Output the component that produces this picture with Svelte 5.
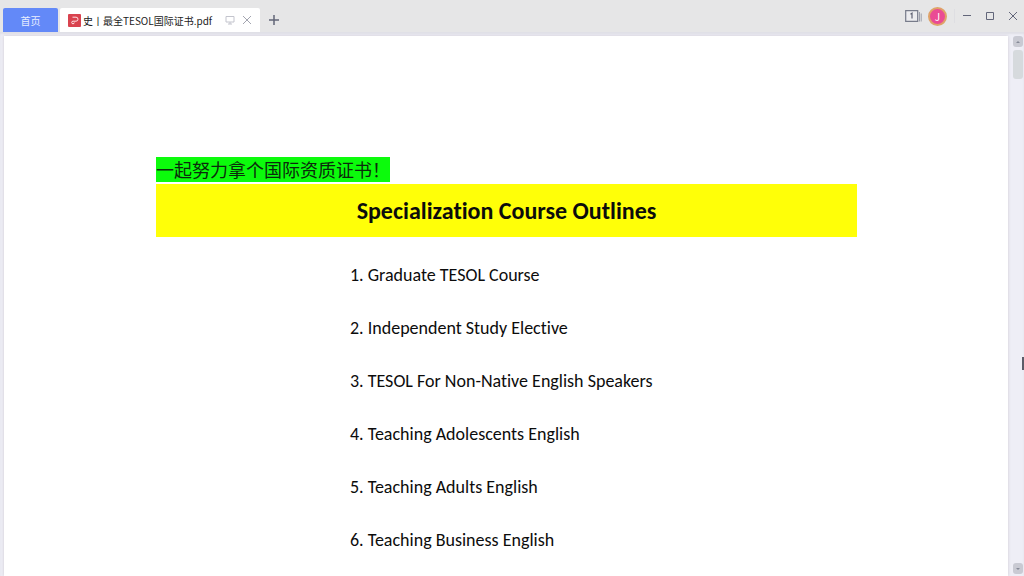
<script lang="ts">
  const fileName = '史丨最全TESOL国际证书.pdf';
  const initial = 'J';

  const courses = [
    'Graduate TESOL Course',
    'Independent Study Elective',
    'TESOL For Non-Native English Speakers',
    'Teaching Adolescents English',
    'Teaching Adults English',
    'Teaching Business English'
  ];
</script>

<div class="app">
  <header class="titlebar">
    <nav class="tabs">
      <button class="tab home">首页</button>
      <div class="tab file">
        <svg class="pdf" viewBox="0 0 13 13" width="13" height="13" aria-hidden="true">
          <rect width="13" height="13" rx="1" fill="#d9434f" />
          <path
            d="M4.5 3.2H8a2 2 0 0 1 0 4H5a1.3 1.3 0 1 0 1.3 1.3"
            fill="none"
            stroke="#ffe3e5"
            stroke-width="1"
          />
        </svg>
        <span class="name">{fileName}</span>
        <button class="icon" aria-label="Present">
          <svg viewBox="0 0 10 10" width="10" height="10">
            <path d="M1 1.5h8v5.5H1zM5 7v2M3 9h4" fill="none" stroke="#c3c4cd" />
          </svg>
        </button>
        <button class="icon" aria-label="Close tab">
          <svg viewBox="0 0 10 10" width="10" height="10">
            <path d="M1 1l8 8M9 1l-8 8" fill="none" stroke="#a3a5b0" />
          </svg>
        </button>
      </div>
      <button class="icon add" aria-label="New tab">
        <svg viewBox="0 0 10 10" width="10" height="10">
          <path d="M5 0v10M0 5h10" fill="none" stroke="#626578" stroke-width="1.5" />
        </svg>
      </button>
    </nav>

    <div class="controls">
      <button class="icon" aria-label="Open windows">
        <svg viewBox="0 0 17 12" width="17" height="12">
          <path d="M.7.7h12v10.6H.7z" fill="#ececef" stroke="#777b8a" stroke-width="1.2" />
          <path d="M14.5 2v9.5M16.2 3.5v8" fill="none" stroke="#9da0ac" />
          <path d="M5.5 4.2L7 3.2v5.3" fill="none" stroke="#5f6273" stroke-width="1.2" />
        </svg>
      </button>
      <button class="avatar" aria-label="Account">{initial}</button>
      <span class="divider"></span>
      <button class="icon" aria-label="Minimize">
        <svg viewBox="0 0 10 10" width="10" height="10">
          <path d="M1 4.5h8" fill="none" stroke="#62667a" />
        </svg>
      </button>
      <button class="icon" aria-label="Maximize">
        <svg viewBox="0 0 10 10" width="10" height="10">
          <path d="M1.5 1.5h7v7h-7z" fill="none" stroke="#62667a" />
        </svg>
      </button>
      <button class="icon" aria-label="Close">
        <svg viewBox="0 0 10 10" width="10" height="10">
          <path d="M1 1l8 8M9 1l-8 8" fill="none" stroke="#62667a" />
        </svg>
      </button>
    </div>
  </header>

  <main class="viewer">
    <article class="page">
      <p class="slogan"><mark>一起努力拿个国际资质证书！</mark></p>
      <h1>Specialization Course Outlines</h1>
      <ol>
        {#each courses as course, i}
          <li>{i + 1}. {course}</li>
        {/each}
      </ol>
    </article>

    <div class="scrollbar">
      <button class="arrow" aria-label="Scroll up">
        <svg viewBox="0 0 6 4" width="6" height="4"><path d="M1 3l2-2 2 2z" fill="#868a98" /></svg>
      </button>
      <div class="track">
        <div class="thumb"></div>
        <div class="grip"></div>
      </div>
      <button class="arrow" aria-label="Scroll down">
        <svg viewBox="0 0 6 4" width="6" height="4"><path d="M1 1l2 2 2-2z" fill="#868a98" /></svg>
      </button>
    </div>
  </main>
</div>

<style>
  :global(body) {
    margin: 0;
    background: #eeeef6;
  }

  .app {
    display: flex;
    flex-direction: column;
    height: 100vh;
    overflow: hidden;
    font-family: 'Noto Sans CJK SC', sans-serif;
  }

  button {
    margin: 0;
    padding: 0;
    border: 0;
    background: none;
    font-family: inherit;
  }

  svg {
    display: block;
  }

  .titlebar {
    display: flex;
    justify-content: space-between;
    height: 32px;
    flex: none;
    padding: 0 6px 0 3px;
    background: #e6e6e7;
  }

  .tabs {
    display: flex;
    align-items: flex-end;
    gap: 2px;
  }

  .tab {
    display: flex;
    align-items: center;
    height: 24px;
    box-sizing: border-box;
    border-radius: 2px 2px 0 0;
  }

  .home {
    justify-content: center;
    width: 55px;
    background: #6389f8;
    color: #e8eeff;
    font-size: 10px;
  }

  .file {
    width: 200px;
    padding: 0 8px;
    background: #fff;
    color: #222;
    font-size: 10px;
  }

  .name {
    flex: 1;
    margin-left: 2px;
    white-space: nowrap;
  }

  .file .icon + .icon {
    margin-left: 7px;
  }

  .add {
    height: 24px;
    margin-left: 7px;
  }

  .controls {
    display: flex;
    align-items: center;
    gap: 13px;
  }

  .avatar {
    width: 19px;
    height: 19px;
    margin-left: -7px;
    border: 2px solid #dfa268;
    border-radius: 50%;
    background: #ea4b94;
    color: #fff;
    font-size: 10px;
    line-height: 15px;
  }

  .divider {
    width: 1px;
    height: 14px;
    margin: 0 -6px;
    background: #dedee2;
  }

  .viewer {
    display: flex;
    flex: 1;
    min-height: 0;
    padding: 4px 0 0 4px;
    background: #eeeef6;
    box-shadow: inset 0 2px 2px #dfdfe6;
  }

  .page {
    flex: 1;
    padding: 121px 151px 0 152px;
    overflow: hidden;
    background: #fff;
    color: #0c0c0c;
    box-shadow: 0 0 3px #cfcbd2;
    font-family: Calibri, Carlito, 'Noto Sans CJK SC', sans-serif;
    font-variant-ligatures: none;
  }

  .slogan {
    margin: 0 0 2px;
    font-family: 'Noto Sans CJK SC', sans-serif;
    font-size: 18px;
    line-height: 25px;
  }

  mark {
    display: inline-block;
    background: #0cfb0c;
    color: #0c2a0c;
  }

  h1 {
    margin: 0 0 12px;
    background: #ffff08;
    font-size: 24px;
    line-height: 53px;
    text-align: center;
  }

  ol {
    margin: 0;
    padding: 0 0 0 194px;
    list-style: none;
    font-size: 18px;
    line-height: 53px;
    white-space: nowrap;
  }

  .scrollbar {
    display: flex;
    flex-direction: column;
    flex: none;
    width: 10px;
    padding: 0 1px 2px 5px;
  }

  .arrow {
    display: flex;
    align-items: center;
    justify-content: center;
    height: 11px;
    border-radius: 3px;
    background: #c9cad3;
  }

  .track {
    position: relative;
    flex: 1;
    padding-top: 3px;
  }

  .thumb {
    height: 29px;
    border-radius: 3px;
    background: #d6dadd;
  }

  .grip {
    position: absolute;
    top: 60%;
    right: -1px;
    width: 2px;
    height: 13px;
    background: #5c5c68;
  }
</style>
